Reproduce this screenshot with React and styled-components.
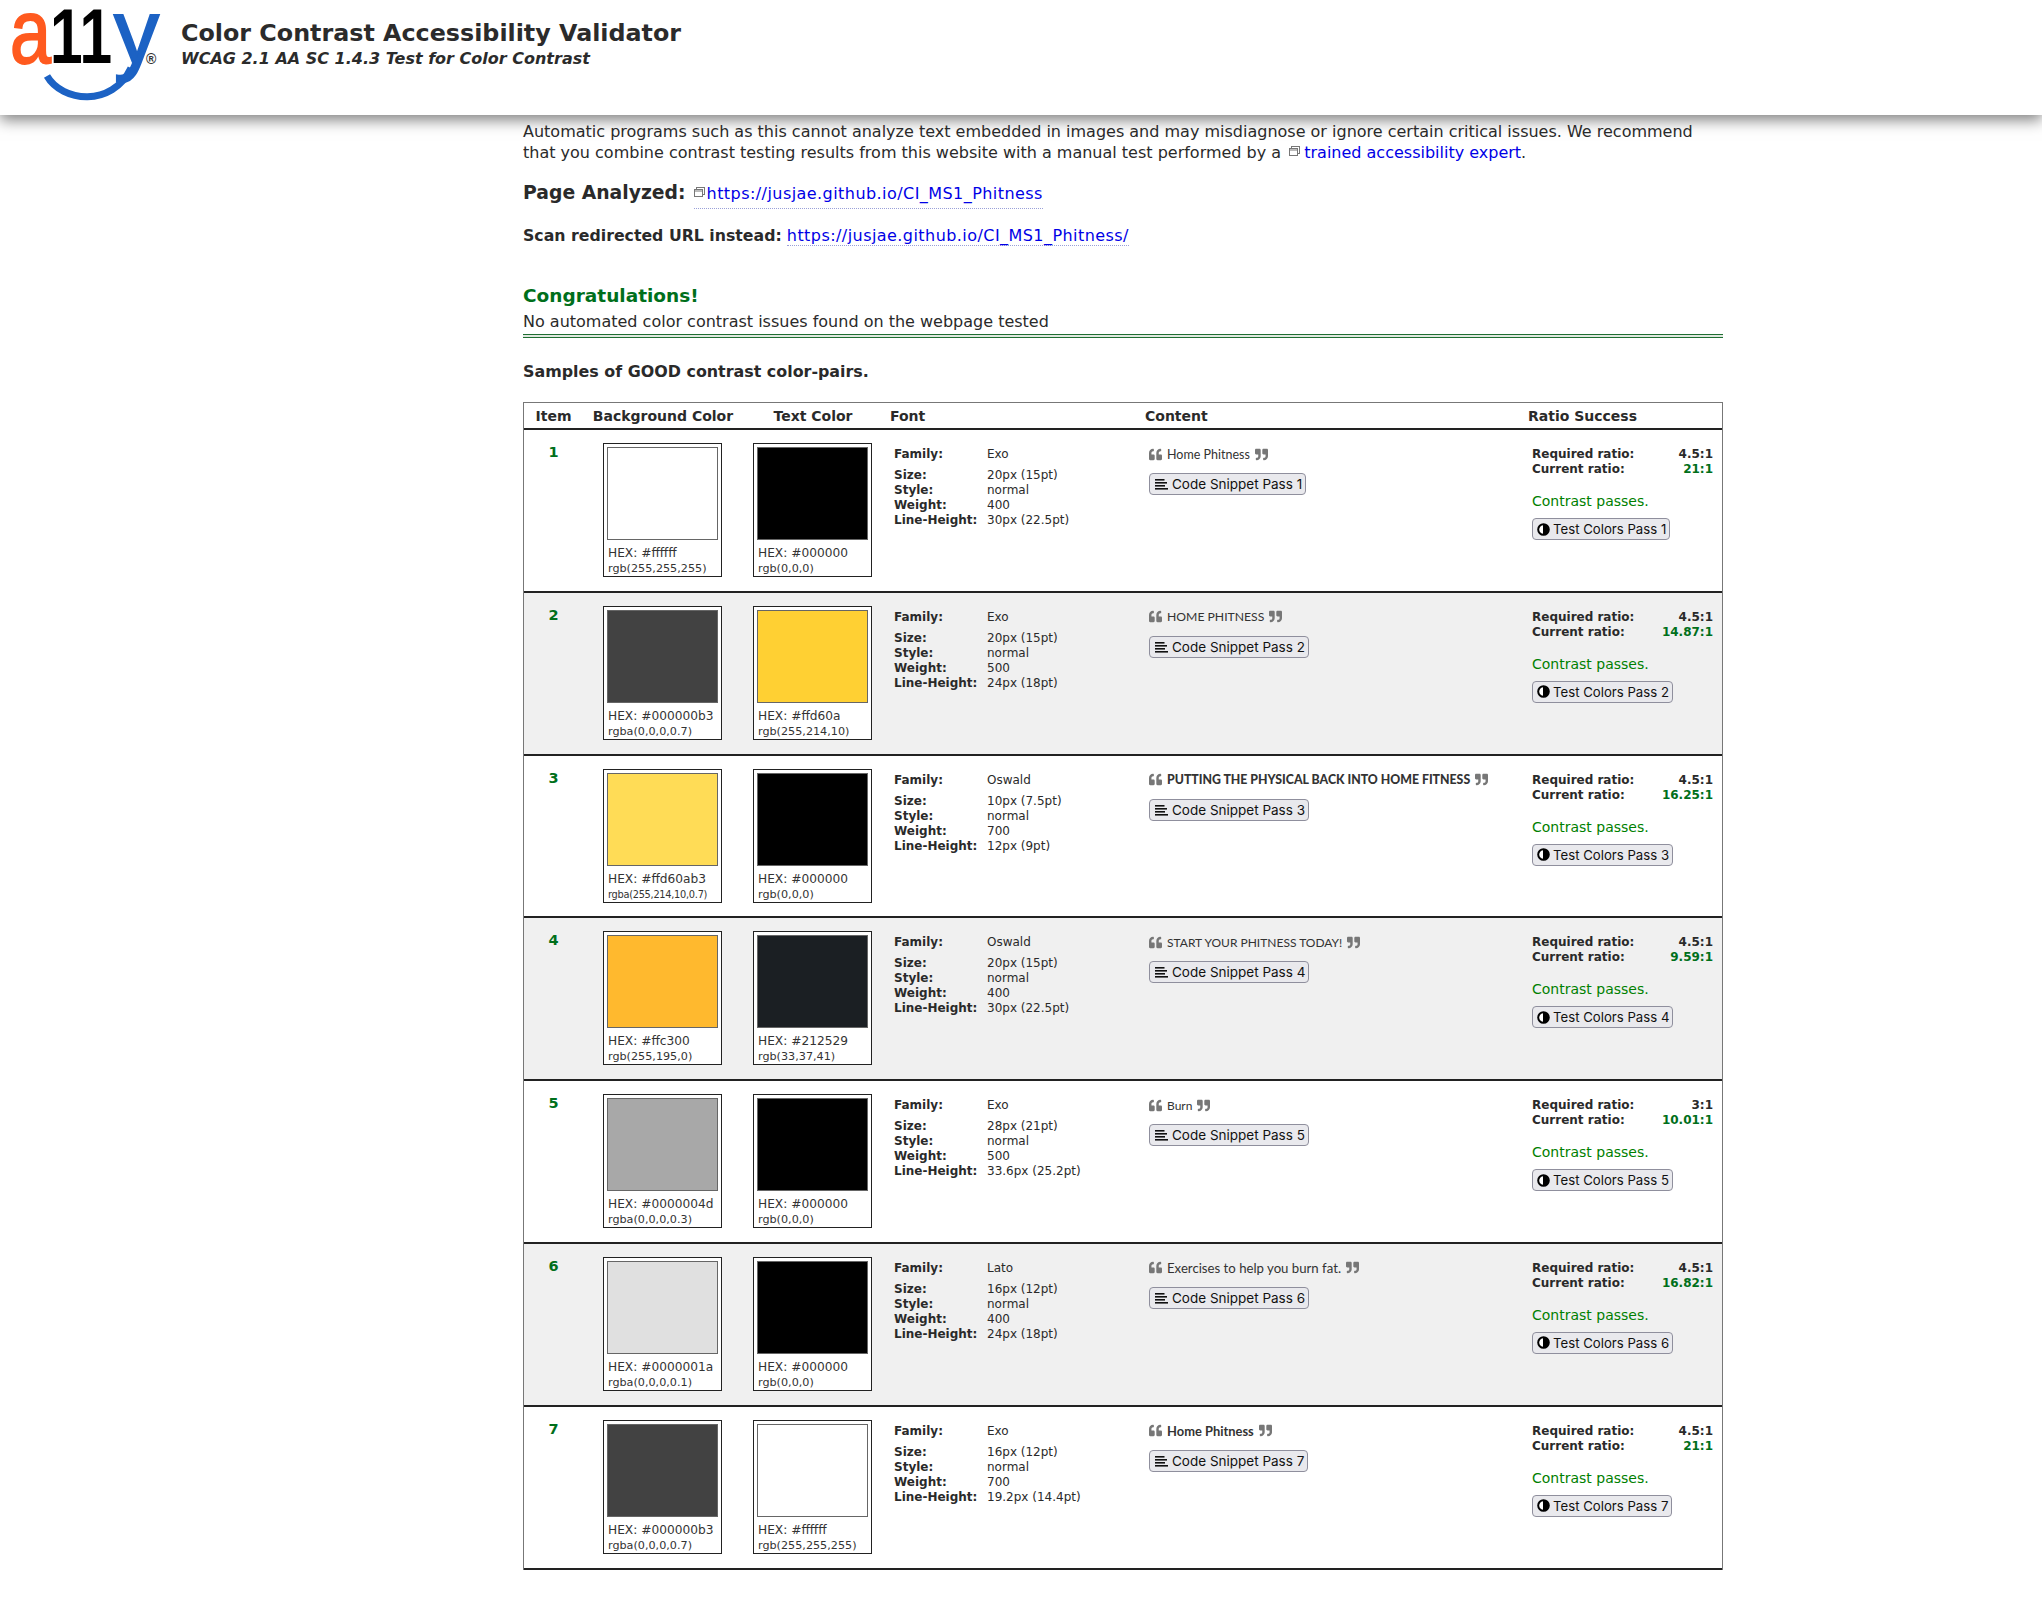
import React from "react";
import styled, { createGlobalStyle } from "styled-components";
import { FaQuoteLeft, FaQuoteRight } from "react-icons/fa";

const Global = createGlobalStyle`
  html, body { margin: 0; padding: 0; background: #fff; }
  body { font-family: "DejaVu Sans", Verdana, sans-serif; color: #2a2a2a; }
`;

const Header = styled.header`
  position: relative;
  z-index: 0;
  display: flex;
  height: 115px;
  background: #fff;
  box-shadow: 0 5px 14px rgba(0, 0, 0, 0.5);
`;
const LogoBox = styled.div`
  width: 181px;
  flex: none;
`;
const TitleBox = styled.div`
  padding-top: 19px;
`;
const Title = styled.h1`
  margin: 0;
  font-size: 23.8px;
  line-height: 29px;
  font-weight: 700;
  color: #2b2b2b;
`;
const Subtitle = styled.h2`
  margin: 0;
  font-size: 16px;
  line-height: 22px;
  font-weight: 700;
  font-style: italic;
  color: #2b2b2b;
`;
const Main = styled.main`
  position: relative;
  width: 1200px;
  margin-left: 523px;
  padding-top: 6px;
  padding-bottom: 56px;
`;
const Intro = styled.p`
  margin: 0;
  width: 1190px;
  font-size: 16px;
  line-height: 21px;
`;
const Link = styled.a`
  color: #0000e6;
  text-decoration: none;
  letter-spacing: ${p => (p.$dotted ? "0.44px" : "0")};
  border-bottom: ${p => (p.$dotted ? "1px dotted #9aa0d8" : "none")};
`;
const PageLine = styled.div`
  margin-top: 16px;
  font-size: 16px;
  line-height: 28px;
  display: flex;
  align-items: baseline;
  gap: 8px;
`;
const PageLabel = styled.b`
  font-size: 18.8px;
`;
const ScanLine = styled.div`
  margin-top: 15px;
  font-size: 16px;
  line-height: 24px;
  b { font-weight: 700; font-size: 15.75px; }
`;
const Congrats = styled.h3`
  margin: 34px 0 0;
  font-size: 18.5px;
  line-height: 28px;
  font-weight: 700;
  color: #006f1b;
`;
const NoIssues = styled.p`
  margin: 0;
  font-size: 16px;
  line-height: 24px;
`;
const DoubleRule = styled.div`
  margin-top: 0;
  height: 2px;
  border-top: 1px solid #1f6e33;
  border-bottom: 1px solid #1f6e33;
  background: #dfe9df;
`;
const SamplesHeading = styled.h4`
  margin: 22px 0 18px;
  font-size: 15.9px;
  line-height: 24px;
  font-weight: 700;
`;
const Table = styled.section`
  border: 1px solid #777;
  border-bottom: none;
`;
const cols = "59px 160px 142px 260px 383px 1fr";
const HeadRow = styled.div`
  display: grid;
  grid-template-columns: ${cols};
  height: 25px;
  align-items: center;
  border-bottom: 2px solid #222;
  font-size: 14px;
  font-weight: 700;
`;
const HeadCell = styled.div`
  text-align: ${p => p.$align || "left"};
  padding-left: ${p => p.$pad || 0}px;
  padding-right: ${p => p.$padRight || 0}px;
  white-space: nowrap;
`;
const Row = styled.div`
  display: grid;
  grid-template-columns: ${cols};
  height: 160.8px;
  border-bottom: 2px solid #222;
  background: ${p => (p.$alt ? "#f0f0f0" : "#fff")};
`;
const ItemNo = styled.div`
  padding-top: 13px;
  text-align: center;
  font-size: 14.5px;
  line-height: 18px;
  font-weight: 700;
  color: #006f1b;
`;
const SwatchCell = styled.div`
  padding: 13px 0 0 ${p => p.$left}px;
`;
const SwatchCard = styled.div`
  width: 119px;
  height: 134px;
  box-sizing: border-box;
  padding: 3px;
  border: 1px solid #222;
  background: #fff;
`;
const Swatch = styled.div`
  height: 93px;
  border: 1px solid #666;
  box-sizing: border-box;
  background: ${p => p.$color};
`;
const HexLine = styled.div`
  margin-top: 5px;
  padding-left: 1px;
  font-size: 12.2px;
  line-height: 17px;
  color: #333;
  white-space: nowrap;
`;
const RgbLine = styled.div`
  padding-left: 1px;
  font-size: ${p => (p.$long ? 9.8 : 11.2)}px;
  letter-spacing: ${p => (p.$long ? -0.28 : 0)}px;
  line-height: 14px;
  color: #333;
  white-space: nowrap;
`;
const FontInfo = styled.dl`
  margin: 0;
  padding: 17px 0 0 9px;
  display: grid;
  grid-template-columns: 93px 1fr;
  grid-auto-rows: 15px;
  font-size: 12px;
  line-height: 15px;
  dt { font-weight: 700; }
  dd { margin: 0; }
  dt:first-of-type, dd:first-of-type { height: 21px; }
  dt:nth-of-type(n+2), dd:nth-of-type(n+2) { margin-top: 6px; }
`;
const ContentCell = styled.div`
  padding: 17px 0 0 4px;
`;
const Quote = styled.div`
  display: flex;
  align-items: center;
  gap: 5px;
  height: 14px;
  white-space: nowrap;
  color: #333;
  font-family: Lato, sans-serif;
  font-size: ${p => p.$size}px;
  font-weight: ${p => p.$weight};
  svg { color: #777; font-size: 13px; flex: none; }
`;
const Btn = styled.button`
  display: inline-flex;
  align-items: center;
  height: 22px;
  border: 1px solid #8f8f9d;
  border-radius: 4px;
  background: #e9e9ed;
  color: #111;
  font-family: Inter, "Liberation Sans", Arial, sans-serif;
  white-space: nowrap;
`;
const SnippetBtn = styled(Btn)`
  margin-top: 12px;
  gap: 4px;
  padding: 0 3px 0 5px;
  font-size: 13.5px;
`;
const RatioCell = styled.div`
  padding: 17px 9px 0 4px;
`;
const RatioLine = styled.div`
  display: flex;
  justify-content: space-between;
  font-size: 12px;
  line-height: 15px;
  font-weight: 700;
`;
const RatioValue = styled.span`
  color: ${p => (p.$ok ? "#006f1b" : "inherit")};
`;
const Passes = styled.div`
  margin-top: 15px;
  color: #008000;
  font-size: 14px;
  line-height: 18px;
`;
const TestBtn = styled(Btn)`
  margin-top: 8px;
  gap: 3px;
  padding: 0 3px 0 4px;
  font-size: 13.2px;
`;

const WinIcon = styled.svg`
  width: 11px;
  height: 11px;
  flex: none;
  margin-left: ${p => p.$before}px;
  margin-right: ${p => p.$after}px;
  vertical-align: 1px;
`;
const ExternalIcon = ({ before = 0, after = 2 }) => (
  <WinIcon $before={before} $after={after} viewBox="0 0 11 11" fill="none" stroke="#777" strokeWidth="1">
    <rect x="2.5" y="0.5" width="8" height="7" fill="#fff" />
    <rect x="0.5" y="2.5" width="8" height="7" fill="#fff" />
    <line x1="0.5" y1="4" x2="8.5" y2="4" />
  </WinIcon>
);

const LinesIcon = () => (
  <svg width="13" height="12" viewBox="0 0 13 12" fill="#111">
    <rect x="0" y="1" width="9.5" height="1.6" />
    <rect x="0" y="4" width="12" height="1.6" />
    <rect x="0" y="7" width="10" height="1.6" />
    <rect x="0" y="10" width="13" height="1.6" />
  </svg>
);

const ContrastIcon = () => (
  <svg width="13" height="13" viewBox="0 0 13 13">
    <circle cx="6.5" cy="6.5" r="5.3" fill="#fff" stroke="#000" strokeWidth="2" />
    <path d="M6 1.2 A5.3 5.3 0 0 1 6 11.8 Z" fill="#000" />
  </svg>
);

const Logo = () => (
  <svg width="170" height="112" viewBox="0 0 170 112" aria-label="a11y logo">
    <g fontFamily="Liberation Sans, Arial, sans-serif">
      <text x="10" y="63" fontSize="90" fill="#ff5a1f" stroke="#ff5a1f" strokeWidth="2" textLength="41" lengthAdjust="spacingAndGlyphs">a</text>
      <text x="50" y="63" fontSize="78" fontWeight="700" fill="#000" textLength="62" lengthAdjust="spacingAndGlyphs">11</text>
      <text x="114" y="63" fontSize="90" fill="#1c62c4" stroke="#1c62c4" strokeWidth="2" textLength="45" lengthAdjust="spacingAndGlyphs">y</text>
      <text x="146" y="64" fontSize="14" fontWeight="700" fill="#333">®</text>
    </g>
    <path d="M47 76 C62 102 112 108 131 68" fill="none" stroke="#1c62c4" strokeWidth="7" />
  </svg>
);

const rows = [
  { bg: "#ffffff", bgHex: "#ffffff", bgRgb: "rgb(255,255,255)", fg: "#000000", fgHex: "#000000", fgRgb: "rgb(0,0,0)", family: "Exo", size: "20px (15pt)", weight: "400", lh: "30px (22.5pt)", text: "Home Phitness", ts: 12.5, tw: 400, req: "4.5:1", cur: "21:1" },
  { bg: "#424242", bgHex: "#000000b3", bgRgb: "rgba(0,0,0,0.7)", fg: "#ffd033", fgHex: "#ffd60a", fgRgb: "rgb(255,214,10)", family: "Exo", size: "20px (15pt)", weight: "500", lh: "24px (18pt)", text: "HOME PHITNESS", ts: 12.2, tw: 400, req: "4.5:1", cur: "14.87:1" },
  { bg: "#ffdc56", bgHex: "#ffd60ab3", bgRgb: "rgba(255,214,10,0.7)", fg: "#000000", fgHex: "#000000", fgRgb: "rgb(0,0,0)", family: "Oswald", size: "10px (7.5pt)", weight: "700", lh: "12px (9pt)", text: "PUTTING THE PHYSICAL BACK INTO HOME FITNESS", ts: 12.3, tw: 900, req: "4.5:1", cur: "16.25:1" },
  { bg: "#ffb92e", bgHex: "#ffc300", bgRgb: "rgb(255,195,0)", fg: "#1b1f23", fgHex: "#212529", fgRgb: "rgb(33,37,41)", family: "Oswald", size: "20px (15pt)", weight: "400", lh: "30px (22.5pt)", text: "START YOUR PHITNESS TODAY!", ts: 12, tw: 400, req: "4.5:1", cur: "9.59:1" },
  { bg: "#a8a8a8", bgHex: "#0000004d", bgRgb: "rgba(0,0,0,0.3)", fg: "#000000", fgHex: "#000000", fgRgb: "rgb(0,0,0)", family: "Exo", size: "28px (21pt)", weight: "500", lh: "33.6px (25.2pt)", text: "Burn", ts: 12, tw: 400, req: "3:1", cur: "10.01:1" },
  { bg: "#e0e0e0", bgHex: "#0000001a", bgRgb: "rgba(0,0,0,0.1)", fg: "#000000", fgHex: "#000000", fgRgb: "rgb(0,0,0)", family: "Lato", size: "16px (12pt)", weight: "400", lh: "24px (18pt)", text: "Exercises to help you burn fat.", ts: 13.2, tw: 400, req: "4.5:1", cur: "16.82:1" },
  { bg: "#424242", bgHex: "#000000b3", bgRgb: "rgba(0,0,0,0.7)", fg: "#ffffff", fgHex: "#ffffff", fgRgb: "rgb(255,255,255)", family: "Exo", size: "16px (12pt)", weight: "700", lh: "19.2px (14.4pt)", text: "Home Phitness", ts: 12.9, tw: 700, req: "4.5:1", cur: "21:1" },
];

export default function App() {
  return (
    <>
      <Global />
      <Header>
        <LogoBox><Logo /></LogoBox>
        <TitleBox>
          <Title>Color Contrast Accessibility Validator</Title>
          <Subtitle>WCAG 2.1 AA SC 1.4.3 Test for Color Contrast</Subtitle>
        </TitleBox>
      </Header>
      <Main>
        <Intro>
          Automatic programs such as this cannot analyze text embedded in images and may misdiagnose or ignore certain critical issues. We recommend that you combine contrast testing results from this website with a manual test performed by a{" "}
          <ExternalIcon before={3} after={4} />
          <Link href="#">trained accessibility expert</Link>.
        </Intro>
        <PageLine>
          <PageLabel>Page Analyzed:</PageLabel>
          <Link href="#" $dotted><ExternalIcon />https://jusjae.github.io/CI_MS1_Phitness</Link>
        </PageLine>
        <ScanLine>
          <b>Scan redirected URL instead:</b> <Link href="#" $dotted>https://jusjae.github.io/CI_MS1_Phitness/</Link>
        </ScanLine>
        <Congrats>Congratulations!</Congrats>
        <NoIssues>No automated color contrast issues found on the webpage tested</NoIssues>
        <DoubleRule />
        <SamplesHeading>Samples of GOOD contrast color-pairs.</SamplesHeading>
        <Table>
          <HeadRow>
            <HeadCell $align="center">Item</HeadCell>
            <HeadCell $align="center">Background Color</HeadCell>
            <HeadCell $align="center" $padRight={2}>Text Color</HeadCell>
            <HeadCell $pad={5}>Font</HeadCell>
            <HeadCell>Content</HeadCell>
            <HeadCell>Ratio Success</HeadCell>
          </HeadRow>
          {rows.map((r, i) => (
            <Row key={i} $alt={i % 2 === 1}>
              <ItemNo>{i + 1}</ItemNo>
              <SwatchCell $left={20}>
                <SwatchCard>
                  <Swatch $color={r.bg} />
                  <HexLine>HEX: {r.bgHex}</HexLine>
                  <RgbLine $long={r.bgRgb.length > 18}>{r.bgRgb}</RgbLine>
                </SwatchCard>
              </SwatchCell>
              <SwatchCell $left={10}>
                <SwatchCard>
                  <Swatch $color={r.fg} />
                  <HexLine>HEX: {r.fgHex}</HexLine>
                  <RgbLine>{r.fgRgb}</RgbLine>
                </SwatchCard>
              </SwatchCell>
              <FontInfo>
                <dt>Family:</dt><dd>{r.family}</dd>
                <dt>Size:</dt><dd>{r.size}</dd>
                <dt>Style:</dt><dd>normal</dd>
                <dt>Weight:</dt><dd>{r.weight}</dd>
                <dt>Line-Height:</dt><dd>{r.lh}</dd>
              </FontInfo>
              <ContentCell>
                <Quote $size={r.ts} $weight={r.tw}>
                  <FaQuoteLeft />{r.text}<FaQuoteRight />
                </Quote>
                <SnippetBtn><LinesIcon />Code Snippet Pass {i + 1}</SnippetBtn>
              </ContentCell>
              <RatioCell>
                <RatioLine><span>Required ratio:</span><RatioValue>{r.req}</RatioValue></RatioLine>
                <RatioLine><span>Current ratio:</span><RatioValue $ok>{r.cur}</RatioValue></RatioLine>
                <Passes>Contrast passes.</Passes>
                <TestBtn><ContrastIcon />Test Colors Pass {i + 1}</TestBtn>
              </RatioCell>
            </Row>
          ))}
        </Table>
      </Main>
    </>
  );
}
